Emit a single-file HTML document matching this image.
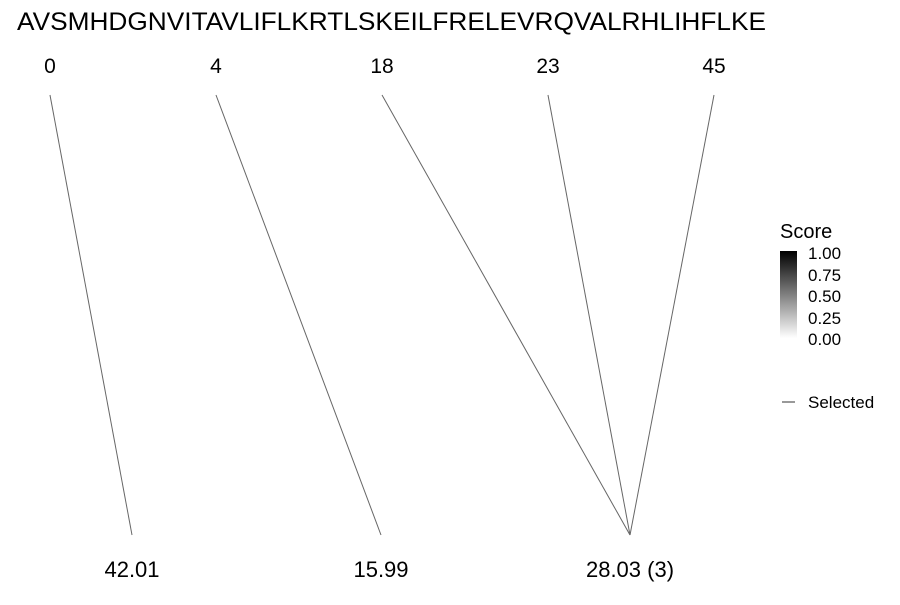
<!DOCTYPE html>
<html><head><style>html,body{margin:0;padding:0;background:#fff}</style></head><body>
<svg width="900" height="600" xmlns="http://www.w3.org/2000/svg" font-family="Liberation Sans, sans-serif">
<defs><linearGradient id="g" x1="0" y1="0" x2="0" y2="1"><stop offset="0" stop-color="#000"/><stop offset="1" stop-color="#fff"/></linearGradient></defs>
<text x="17" y="30" font-size="25" textLength="749" lengthAdjust="spacingAndGlyphs">AVSMHDGNVITAVLIFLKRTLSKEILFRELEVRQVALRHLIHFLKE</text>
<g font-size="21" text-anchor="middle">
<text x="50" y="73">0</text><text x="216" y="73">4</text><text x="382" y="73">18</text><text x="548" y="73">23</text><text x="714" y="73">45</text>
</g>
<g font-size="22" text-anchor="middle">
<text x="132" y="577">42.01</text><text x="381" y="577">15.99</text><text x="630" y="577">28.03 (3)</text>
</g>
<g stroke="#666" stroke-width="1" fill="none">
<line x1="50" y1="95" x2="132" y2="535"/><line x1="216" y1="95" x2="381" y2="535"/><line x1="382" y1="95" x2="630" y2="535"/><line x1="548" y1="95" x2="630" y2="535"/><line x1="714" y1="95" x2="630" y2="535"/>
</g>
<text x="780" y="238" font-size="20">Score</text>
<rect x="780" y="251" width="17" height="87" fill="url(#g)"/>
<g font-size="17"><text x="808" y="259">1.00</text><text x="808" y="281">0.75</text><text x="808" y="302">0.50</text><text x="808" y="324">0.25</text><text x="808" y="345">0.00</text>
<text x="808" y="408">Selected</text></g>
<line x1="782" y1="402" x2="795" y2="402" stroke="#333"/>
</svg>
</body></html>
